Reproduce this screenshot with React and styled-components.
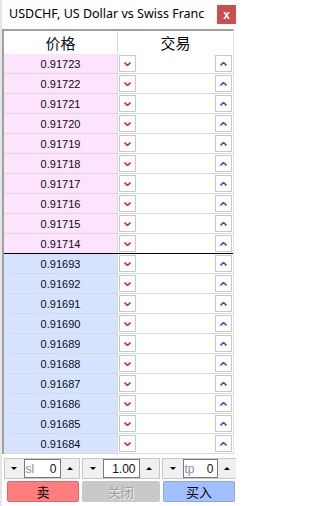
import React from "react";
import styled, { createGlobalStyle } from "styled-components";

const GlobalStyle = createGlobalStyle`
  html, body {
    margin: 0;
    padding: 0;
    background: #ffffff;
  }
  body {
    font-family: "Liberation Sans", "Noto Sans CJK SC", sans-serif;
  }
`;

const asks = [
  "0.91723", "0.91722", "0.91721", "0.91720", "0.91719",
  "0.91718", "0.91717", "0.91716", "0.91715", "0.91714",
];
const bids = [
  "0.91693", "0.91692", "0.91691", "0.91690", "0.91689",
  "0.91688", "0.91687", "0.91686", "0.91685", "0.91684",
];

const Window = styled.div`
  width: 236px;
  height: 506px;
  display: flex;
  flex-direction: column;
  background: #ffffff;
  border-left: 2px solid #e6e6e6;
  box-sizing: border-box;
  overflow: hidden;
`;

const TitleBar = styled.div`
  height: 29px;
  display: flex;
  align-items: flex-start;
  justify-content: space-between;
  box-sizing: border-box;
`;

const Title = styled.div`
  padding: 6px 0 0 7px;
  font-family: "Noto Sans", "Liberation Sans", sans-serif;
  font-size: 12.5px;
  line-height: 16px;
  color: #000;
  white-space: nowrap;
`;

const CloseBtn = styled.div`
  margin-top: 5px;
  width: 19px;
  height: 19px;
  background: #c75050;
  color: #fff;
  font-family: "Liberation Sans", sans-serif;
  font-size: 12px;
  font-weight: bold;
  display: flex;
  align-items: center;
  justify-content: center;
  line-height: 1;
`;

const Grid = styled.div`
  width: 232px;
  border-top: 2px solid #a0a0a0;
  border-left: 2px solid #a0a0a0;
  border-right: 1px solid #e3e3e3;
  box-sizing: border-box;
  display: flex;
  flex-direction: column;
`;

const Row = styled.div`
  display: grid;
  grid-template-columns: 114px 1fr;
  height: ${(p) => p.$h || 20}px;
  box-sizing: border-box;
  border-bottom: 1px solid ${(p) => (p.$split ? "#000" : p.$head ? "transparent" : "#d9d9d9")};
`;

const PriceCell = styled.div`
  background: ${(p) => p.$bg || "#fff"};
  border-right: 1px solid #d9d9d9;
  display: flex;
  align-items: center;
  justify-content: center;
  font-size: ${(p) => (p.$head ? "15px" : "11px")};
  color: #0a0a1a;
  font-family: ${(p) =>
    p.$head ? '"Noto Sans CJK SC", sans-serif' : '"Liberation Sans", sans-serif'};
`;

const TradeCell = styled.div`
  display: flex;
  align-items: center;
  justify-content: ${(p) => (p.$head ? "center" : "space-between")};
  padding: 0 1px 0 1px;
  font-size: 15px;
  font-family: "Noto Sans CJK SC", sans-serif;
  color: #000;
`;

const ArrowBox = styled.div`
  width: 17px;
  height: 17px;
  box-sizing: border-box;
  border: 1px solid #c8c8c8;
  background: #fff;
  display: flex;
  align-items: center;
  justify-content: center;
`;

const Chevron = ({ up }) => (
  <svg width="7" height="4" viewBox="0 0 7 4">
    <path
      d={up ? "M0.5 3.5 L3.5 0.5 L6.5 3.5" : "M0.5 0.5 L3.5 3.5 L6.5 0.5"}
      fill="none"
      stroke={up ? "#3f4fd8" : "#e5293d"}
      strokeWidth="1.6"
    />
  </svg>
);

const Bottom = styled.div`
  flex: 1;
  display: flex;
  flex-direction: column;
  padding: 4px 1px 0 2px;
  gap: 2px;
`;

const Controls = styled.div`
  display: grid;
  grid-template-columns: 76px 78px 76px;
  gap: 2px;
  height: 21px;
`;

const Group = styled.div`
  display: flex;
  align-items: stretch;
  background: #f0f0f0;
  border: 1px solid #c8c8c8;
`;

const Spin = styled.div`
  flex: 1;
  display: flex;
  align-items: center;
  justify-content: center;
`;

const Tri = styled.span`
  width: 0;
  height: 0;
  border-left: 3px solid transparent;
  border-right: 3px solid transparent;
  ${(p) => (p.$up ? "border-bottom: 3px solid #000;" : "border-top: 3px solid #000;")}
`;

const Field = styled.div`
  width: ${(p) => p.$w}px;
  background: #fff;
  border: 1px solid #7a7a7a;
  box-sizing: border-box;
  display: flex;
  align-items: center;
  justify-content: space-between;
  padding: 0 3px 0 1px;
  font-family: "Liberation Sans", sans-serif;
  font-size: 12px;
`;

const Hint = styled.span`
  color: #8a8aa8;
  font-size: 12px;
`;

const Value = styled.span`
  color: #10101a;
  margin-left: auto;
`;

const Buttons = styled.div`
  display: grid;
  grid-template-columns: 72px 78px 72px;
  gap: 3px;
  padding-left: 3px;
  height: 20px;
`;

const ActionBtn = styled.div`
  background: ${(p) => p.$bg};
  border: 1px solid ${(p) => p.$border};
  border-radius: 2px;
  display: flex;
  align-items: center;
  justify-content: center;
  font-family: "Noto Sans CJK SC", sans-serif;
  font-size: 13px;
  color: ${(p) => p.$color || "#000"};
  text-shadow: ${(p) => (p.$disabled ? "1px 1px 0 #f4f4f4" : "none")};
`;

const SpinBox = ({ hint, value, fw }) => (
  <Group>
    <Spin>
      <Tri />
    </Spin>
    <Field $w={fw}>
      {hint && <Hint>{hint}</Hint>}
      <Value>{value}</Value>
    </Field>
    <Spin>
      <Tri $up />
    </Spin>
  </Group>
);

const PriceRow = ({ price, bg, split }) => (
  <Row $split={split}>
    <PriceCell $bg={bg}>{price}</PriceCell>
    <TradeCell>
      <ArrowBox>
        <Chevron />
      </ArrowBox>
      <ArrowBox>
        <Chevron up />
      </ArrowBox>
    </TradeCell>
  </Row>
);

export default function App() {
  return (
    <>
      <GlobalStyle />
      <Window>
        <TitleBar>
          <Title>USDCHF, US Dollar vs Swiss Franc</Title>
          <CloseBtn>x</CloseBtn>
        </TitleBar>
        <Grid>
          <Row $h={23} $head>
            <PriceCell $head>价格</PriceCell>
            <TradeCell $head>交易</TradeCell>
          </Row>
          {asks.map((p, i) => (
            <PriceRow key={p} price={p} bg="#fde3fb" split={i === asks.length - 1} />
          ))}
          {bids.map((p) => (
            <PriceRow key={p} price={p} bg="#d5e3ff" />
          ))}
        </Grid>
        <Bottom>
          <Controls>
            <SpinBox hint="sl" value="0" fw={37} />
            <SpinBox value="1.00" fw={37} />
            <SpinBox hint="tp" value="0" fw={35} />
          </Controls>
          <Buttons>
            <ActionBtn $bg="#ff7d7d" $border="#d86a6a">卖</ActionBtn>
            <ActionBtn $bg="#c9c9c9" $border="#c9c9c9" $color="#a0a0a0" $disabled>
              关闭
            </ActionBtn>
            <ActionBtn $bg="#a0c0ff" $border="#8aa8e8">买入</ActionBtn>
          </Buttons>
        </Bottom>
      </Window>
    </>
  );
}
